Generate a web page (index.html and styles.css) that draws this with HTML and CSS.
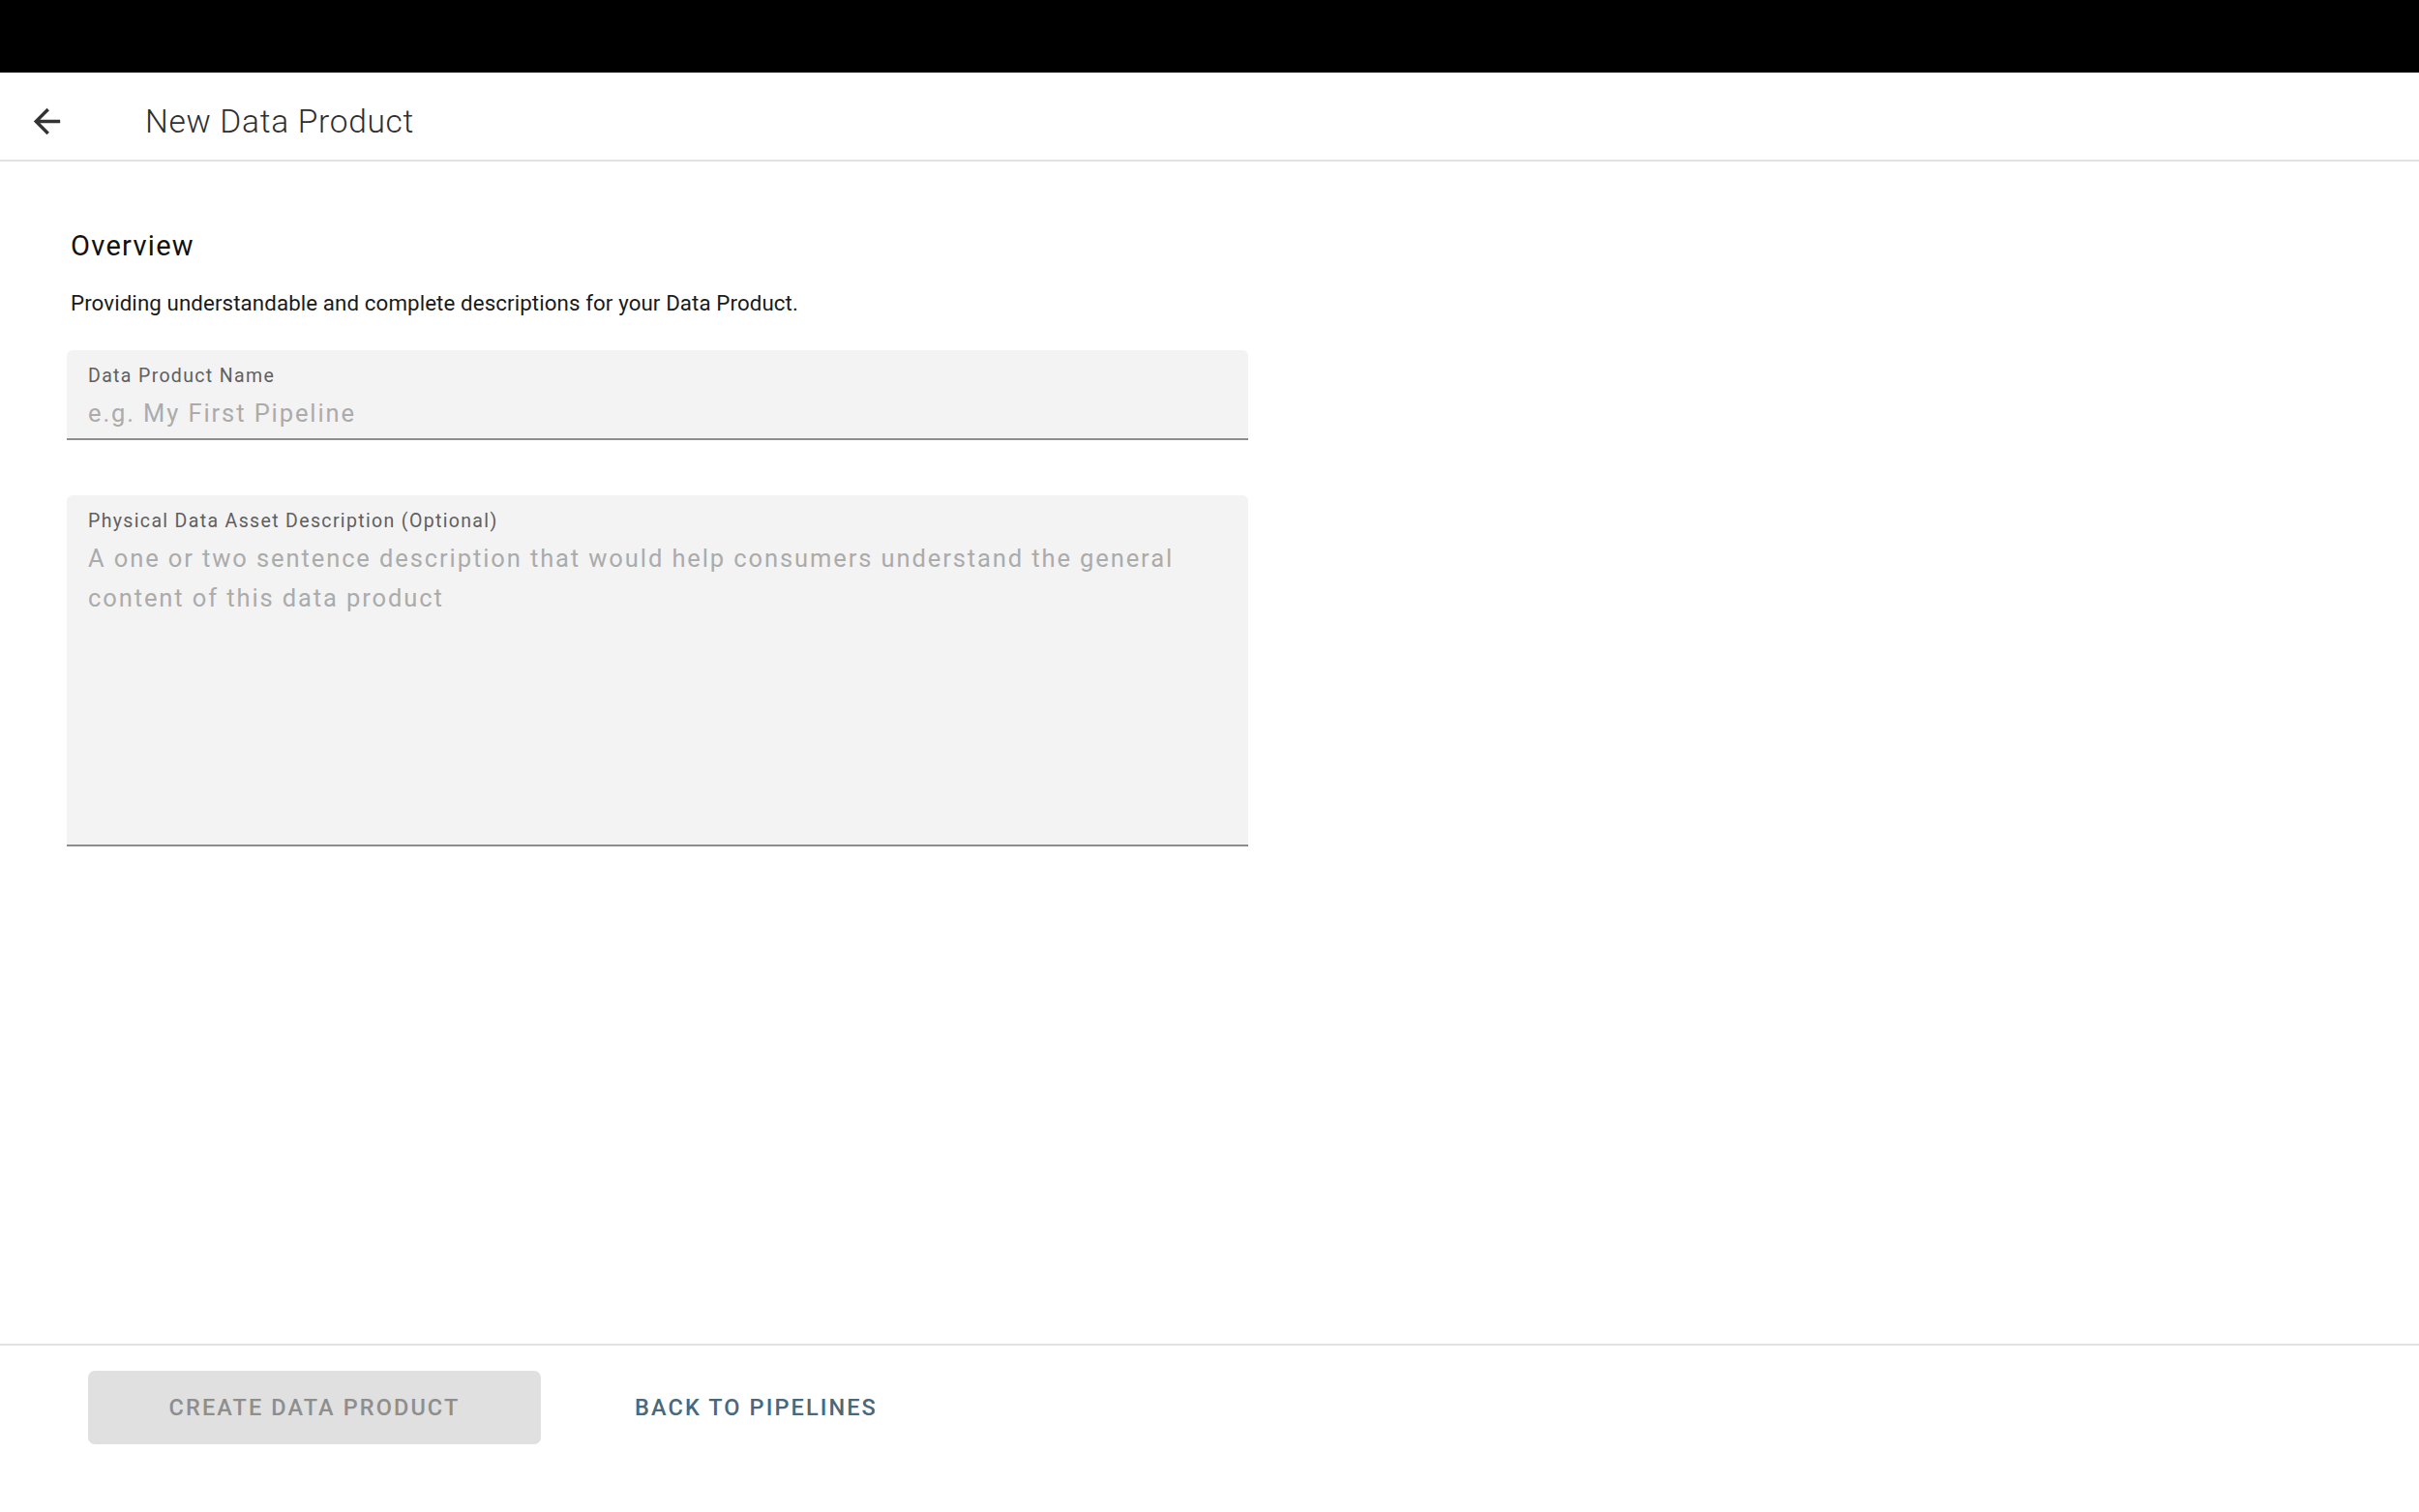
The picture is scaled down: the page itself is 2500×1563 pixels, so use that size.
FILE: index.html
```html
<!DOCTYPE html>
<html lang="en">
<head>
<meta charset="utf-8">
<title>New Data Product</title>
<link rel="stylesheet" href="styles.css">
</head>
<body>
<div class="app">
  <div class="topbar"></div>
  <header class="page-header">
    <button class="back-btn" aria-label="Back">
      <svg class="back-icon" viewBox="0 0 24 24" aria-hidden="true"><path d="M20 11H7.83l5.59-5.59L12 4l-8 8 8 8 1.41-1.41L7.83 13H20v-2z"/></svg>
    </button>
    <h1 class="page-title">New Data Product</h1>
  </header>
  <main class="content">
    <h2 class="section-title">Overview</h2>
    <p class="section-desc">Providing understandable and complete descriptions for your Data Product.</p>
    <div class="field">
      <div class="field-label">Data Product Name</div>
      <div class="field-placeholder">e.g. My First Pipeline</div>
    </div>
    <div class="field field-area">
      <div class="field-label">Physical Data Asset Description (Optional)</div>
      <div class="field-placeholder">A one or two sentence description that would help consumers understand the general<br>content of this data product</div>
    </div>
  </main>
  <footer class="page-footer">
    <button class="btn btn-disabled" disabled>Create Data Product</button>
    <button class="btn btn-text">Back to Pipelines</button>
  </footer>
</div>
</body>
</html>
```
FILE: styles.css
```css
* { box-sizing: border-box; }
html, body { margin: 0; padding: 0; }
body {
  font-family: Roboto, "Noto Sans", "Liberation Sans", sans-serif;
  background: #ffffff;
  color: #1f1f1f;
}
.app {
  display: flex;
  flex-direction: column;
  height: 100vh;
}
.topbar {
  height: 75px;
  background: #000000;
  flex: none;
}
.page-header {
  flex: none;
  height: 92px;
  border-bottom: 2px solid #e2e2e2;
  display: flex;
  align-items: center;
  padding: 11px 0 0 28px;
}
.back-btn {
  background: none;
  border: 0;
  padding: 0;
  width: 41px;
  height: 41px;
  display: flex;
  cursor: pointer;
}
.back-icon {
  width: 41px;
  height: 41px;
  fill: #333333;
}
.page-title {
  margin: 0 0 0 81px;
  font-size: 33.5px;
  line-height: 40px;
  font-weight: 300;
  color: #2e2e2e;
  letter-spacing: 0.7px;
}
.content {
  flex: 1;
  padding: 69px 0 0 69px;
}
.section-title {
  margin: 0 0 0 4px;
  font-size: 29px;
  line-height: 36px;
  font-weight: 400;
  color: #111111;
  letter-spacing: 1.3px;
}
.section-desc {
  margin: 26px 0 0 4px;
  font-size: 22.3px;
  line-height: 30px;
  color: #1a1a1a;
  letter-spacing: 0.1px;
}
.field {
  margin-top: 34px;
  width: 1221px;
  height: 93px;
  background: #f3f3f3;
  border-bottom: 2px solid #8d8d8d;
  border-radius: 6px 6px 0 0;
  padding: 15px 22px 0 22px;
}
.field-area {
  margin-top: 57px;
  height: 363px;
}
.field-label {
  font-size: 19.5px;
  line-height: 24px;
  color: #606060;
  letter-spacing: 1.35px;
}
.field-placeholder {
  margin-top: 6px;
  font-size: 25.5px;
  line-height: 41px;
  color: #ababab;
  letter-spacing: 1.9px;
}
.page-footer {
  flex: none;
  height: 174px;
  border-top: 2px solid #e2e2e2;
  display: flex;
  align-items: flex-start;
  padding: 26px 0 0 91px;
}
.btn {
  font-family: Roboto, "Noto Sans", "Liberation Sans", sans-serif;
  font-size: 23.5px;
  font-weight: 500;
  letter-spacing: 2.1px;
  text-transform: uppercase;
  border: 0;
  height: 76px;
  padding: 0;
}
.btn-disabled {
  width: 468px;
  background: #e0e0e0;
  color: #8e8e8e;
  border-radius: 7px;
}
.btn-text {
  margin-left: 97px;
  background: none;
  color: #4b6879;
  cursor: pointer;
}
```
